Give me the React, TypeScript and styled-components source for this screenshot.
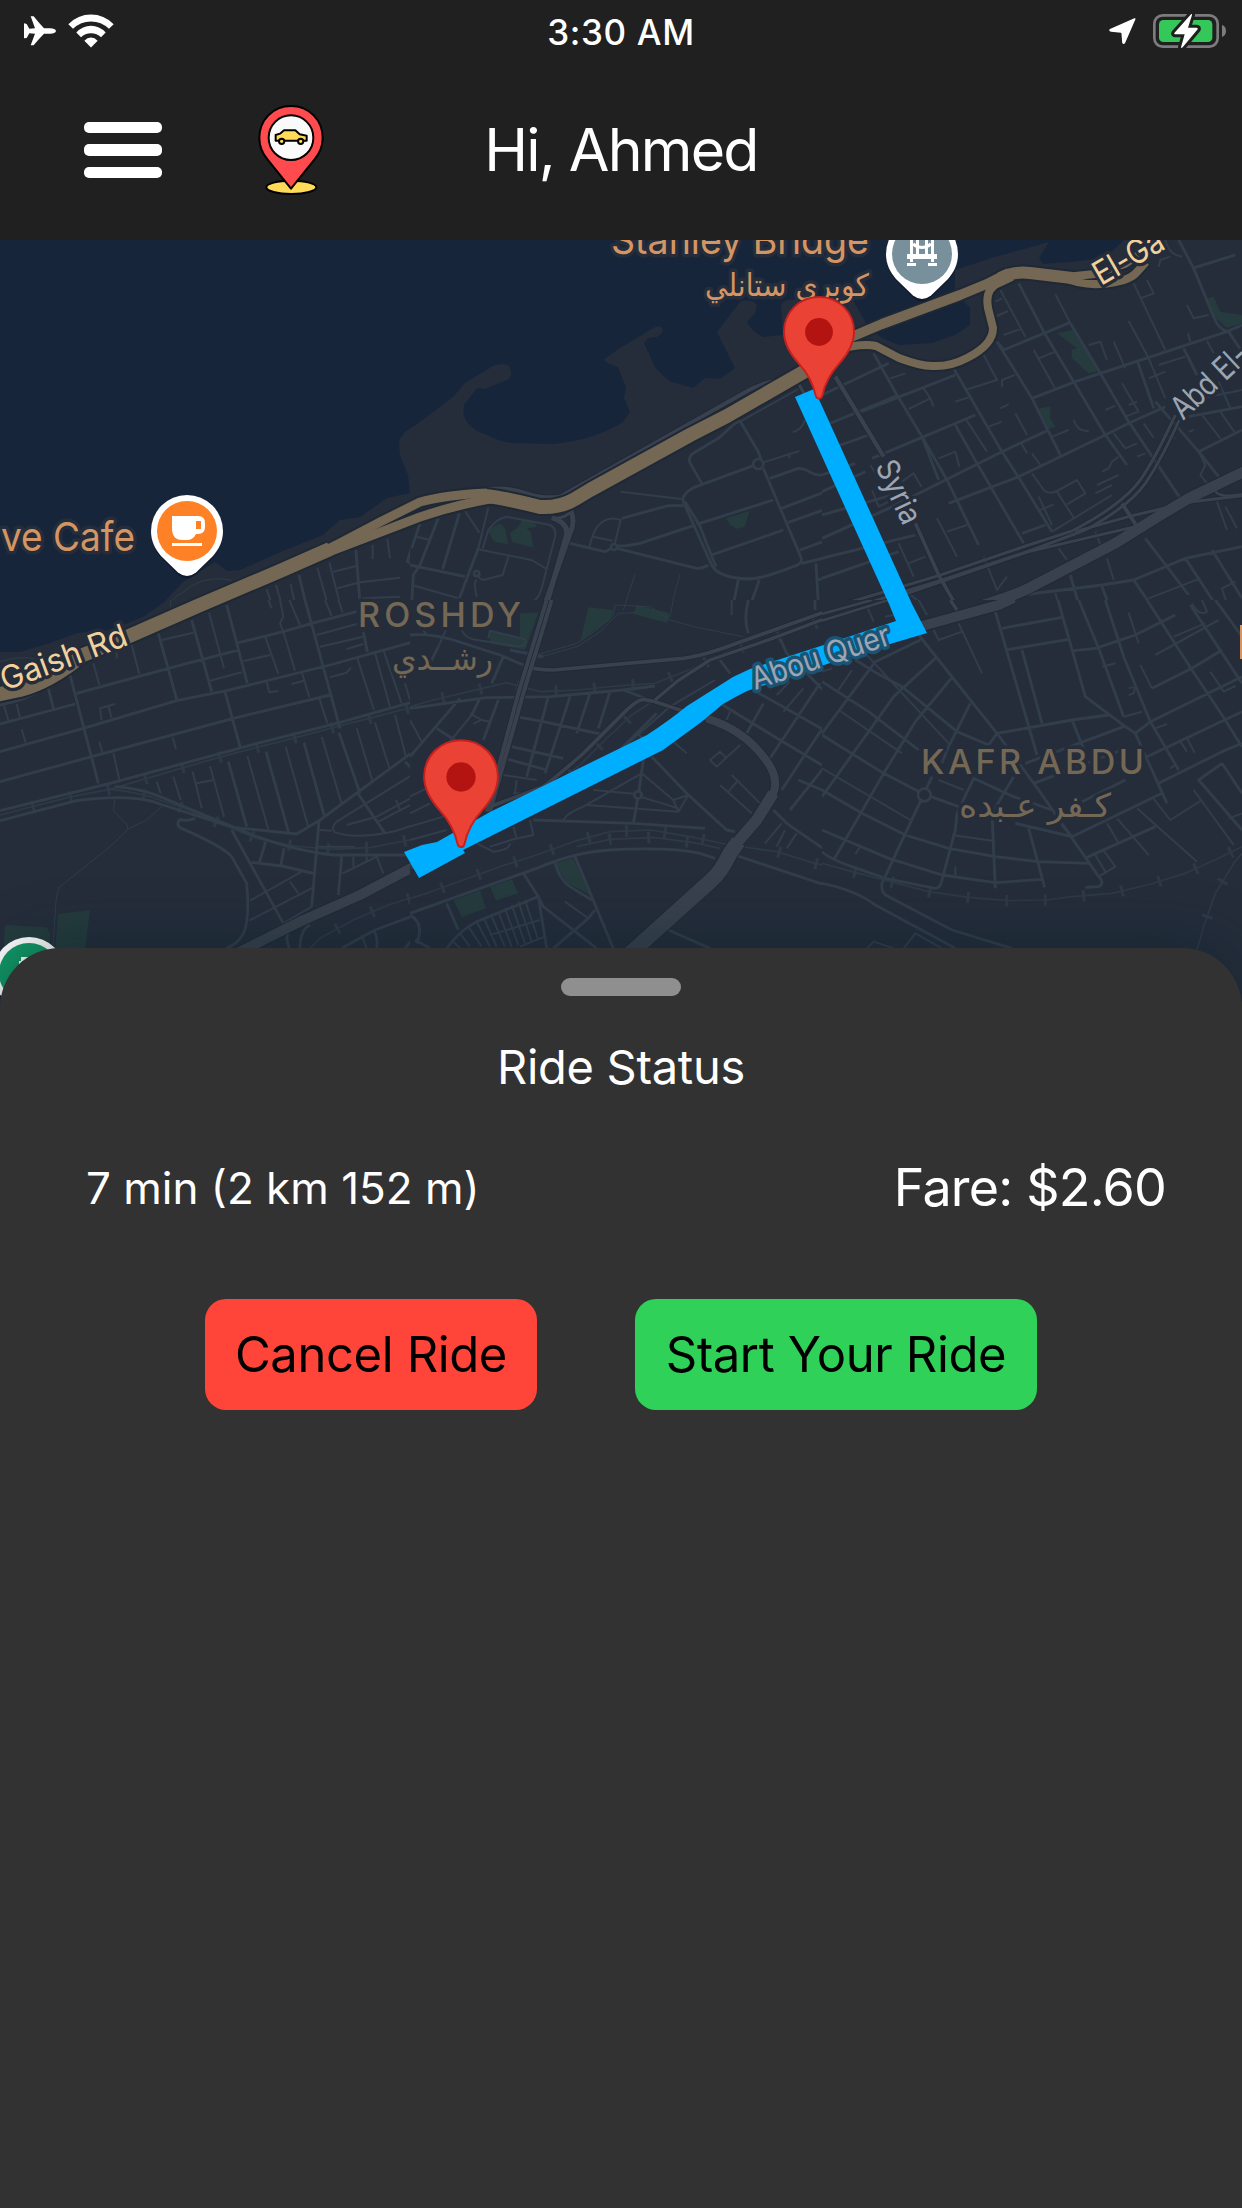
import React from "react";
import styled, { createGlobalStyle } from "styled-components";

const UI_FONT = `Inter, "Liberation Sans", sans-serif`;
const ARABIC_FONT = `"DejaVu Sans", "Noto Sans", sans-serif`;

const GlobalStyle = createGlobalStyle`
  *, *::before, *::after { box-sizing: border-box; }
  html, body { margin: 0; padding: 0; background: #323232; }
  body { font-family: ${UI_FONT}; color: #fff; }
`;

const Screen = styled.main`
  display: flex;
  flex-direction: column;
  width: 1242px;
  height: 2208px;
  overflow: hidden;
  background: #323232;
`;

const StatusBar = styled.div`
  display: grid;
  grid-template-columns: 1fr auto 1fr;
  align-items: center;
  height: 60px;
  padding: 0 16px;
  background: #202020;
`;

const StatusGroup = styled.div<{ $end?: boolean }>`
  display: flex;
  align-items: center;
  justify-content: ${(p) => (p.$end ? "flex-end" : "flex-start")};
  gap: ${(p) => (p.$end ? 16 : 12)}px;
  padding-left: 8px;
`;

const Clock = styled.time`
  font-size: 35px;
  font-weight: 500;
  line-height: 60px;
  letter-spacing: 0.6px;
  padding-top: 2px;
`;

const Header = styled.header`
  display: grid;
  grid-template-columns: 1fr auto 1fr;
  align-items: center;
  height: 180px;
  padding: 0 84px;
  background: #202020;
`;

const HeaderLeft = styled.div`
  display: flex;
  align-items: center;
  gap: 96px;
`;

const MenuButton = styled.button`
  display: flex;
  flex-direction: column;
  gap: 11px;
  width: 78px;
  padding: 0;
  border: 0;
  background: none;
`;

const MenuBar = styled.span`
  display: block;
  height: 11.5px;
  border-radius: 5px;
  background: #fff;
`;

const Greeting = styled.h1`
  margin: 0;
  font-size: 59px;
  font-weight: 400;
  line-height: 70px;
  letter-spacing: -1.8px;
`;

const MapArea = styled.section`
  height: 768px;
  flex: none;
  overflow: hidden;
  background: #17253b;
  & > svg { display: block; }
`;

const Sheet = styled.section`
  position: relative;
  flex: 1;
  display: flex;
  flex-direction: column;
  align-items: center;
  margin-top: -60px;
  padding-top: 30px;
  border-radius: 60px 60px 0 0;
  background: #323232;
  box-shadow: 0 -6px 60px rgba(4, 30, 40, 0.38);
`;

const Handle = styled.div`
  width: 120px;
  height: 18px;
  border-radius: 9px;
  background: #8f8f8f;
`;

const SheetTitle = styled.h2`
  margin: 41px 0 0;
  font-size: 47px;
  font-weight: 400;
  line-height: 60px;
  letter-spacing: -0.3px;
`;

const TripRow = styled.div`
  display: flex;
  justify-content: space-between;
  align-items: center;
  width: 100%;
  height: 80px;
  margin-top: 51px;
  padding: 0 76px 0 86px;
`;

const TripText = styled.span<{ $size: number; $tracking: number }>`
  font-size: ${(p) => p.$size}px;
  letter-spacing: ${(p) => p.$tracking}px;
  line-height: 60px;
  white-space: nowrap;
`;

const Actions = styled.div`
  display: flex;
  gap: 98px;
  margin-top: 71px;
`;

const ActionButton = styled.button<{ $tone: string; $width: number }>`
  width: ${(p) => p.$width}px;
  height: 111px;
  padding: 0;
  border: 0;
  border-radius: 21px;
  background: ${(p) => p.$tone};
  color: #000;
  font-family: ${UI_FONT};
  font-size: 49px;
  letter-spacing: -0.4px;
  white-space: nowrap;
`;

const StreetText = styled.text<{ $color: string; $halo?: string; $size: number }>`
  font-family: ${UI_FONT};
  font-size: ${(p) => p.$size}px;
  fill: ${(p) => p.$color};
  stroke: ${(p) => p.$halo ?? "#252d3b"};
  stroke-width: 7px;
  stroke-linejoin: round;
  paint-order: stroke;
`;

const ArabicText = styled(StreetText)`
  font-family: ${ARABIC_FONT};
  direction: rtl;
`;

/* ---------- status bar and header icons ---------- */

const AirplaneIcon = () => (
  <svg width="32" height="30" viewBox="72 50 96 90" fill="#fff">
    <path d="M168 95Q166 103 150 103L132 103Q115 120 101 138H92L105 103L88 102L80 116L72 117V72L80 74L88 88L105 87L92 51H101Q114 68 132 87L150 87Q166 87 168 95Z" />
  </svg>
);

const WifiIcon = () => (
  <svg width="46" height="34" viewBox="204 38 138 101" fill="#fff">
    <path d="M205 68Q234 39 273 39Q312 39 341 68L327 82Q304 60 273 60Q242 60 219 82Z" />
    <path d="M229 93Q248 73 273 73Q298 73 317 93L303 107Q291 95 273 95Q255 95 243 107Z" />
    <path d="M253 118Q262 108 273 108Q284 108 293 118L273 138Z" />
  </svg>
);

const LocationIcon = () => (
  <svg width="28" height="28" viewBox="28 51 84 84" fill="#fff" stroke="#fff" strokeWidth="5" strokeLinejoin="round">
    <path d="M105 57L32 89Q30 92 35 93L64 96Q68 97 68 101L70 127Q71 131 74 128Z" />
  </svg>
);

const BatteryIcon = () => (
  <svg width="73" height="36" viewBox="159 36 219 108">
    <rect x="163" y="43" width="190" height="94" rx="25" fill="none" stroke="#7c7c7e" strokeWidth="8" />
    <rect x="177" y="57" width="160" height="66" rx="13" fill="#34c759" />
    <path d="M366 72Q378 76 378 90Q378 104 366 108Z" fill="#7c7c7e" />
    <path d="M273 40L223 96Q221 100 226 100H254L243 139Q243 143 248 139L293 85Q295 80 290 80H264L276 42Q277 37 273 40Z" fill="#fff" stroke="#202020" strokeWidth="18" paintOrder="stroke" />
  </svg>
);

const LogoIcon = () => (
  <svg width="66" height="90" viewBox="24 29 198 270" stroke="#000" strokeWidth="6" strokeLinejoin="round">
    <ellipse cx="124" cy="276" rx="75" ry="20" fill="#ffdb57" />
    <path d="M123 32C68 32 28 75 28 128C28 154 37 174 53 193L123 280L193 193C209 174 218 154 218 128C218 75 178 32 123 32Z" fill="#ff4b4d" />
    <circle cx="123" cy="127" r="67" fill="#fafafa" />
    <path d="M77 136V119L90 115L102 105H136L149 117L170 121V136H77Z" fill="#ffdb57" />
    <circle cx="95" cy="138" r="8" fill="#ffdb57" />
    <circle cx="152" cy="138" r="8" fill="#ffdb57" />
  </svg>
);

/* ---------- map data: six survey tiles, three tile units per pixel ---------- */

type Tile = {
  id: string;
  x: number;
  y: number;
  w: number;
  h: number;
  parks?: string;
  thin?: string;
  minor: string;
  local?: string;
  rail?: string;
  rings?: [number, number, number][];
  arterial?: { d: string; w: number }[];
};

const TILES: Tile[] = [
  {
    id: "shore-west", x: 0, y: 235, w: 1230, h: 1095,
    thin: "M512 1108Q520 1085 545 1075Q590 1035 640 1032Q670 1030 695 1036",
    minor: "M800 1062L815 1108M828 1050L845 1108M872 1048L885 1108M952 998L983 1108M988 982L1020 1108M1000 1010L1072 992M1012 1060L1080 1042L1200 1028M1118 930V972M1162 912L1170 970M1085 1090L1200 1085",
    local: "M897 1020L918 1108M1068 945L1080 1108M1255 870L1222 980L1250 992L1238 1020L1235 1108",
  },
  {
    id: "shore-mid", x: 410, y: 235, w: 1236, h: 1095,
    parks: "M232 885L270 865L285 880L295 928L252 920ZM320 880L340 852L375 865L380 875L350 880L362 890L370 938L305 920L300 893ZM948 850L1018 828L1005 875L980 882L960 870Z",
    thin: "M675 1018L645 1108M810 1018L785 1108M615 1105H670",
    minor: "M20 905L60 915M165 828L208 893M235 818L205 940M295 965L278 1020L220 1035Q205 1032 200 1015M200 1035Q190 1040 200 1085M200 942L365 975L410 1002M5 1050L145 1090M550 905L608 917M612 935L632 855Q590 840 562 875Q550 890 538 935M632 770L815 792M990 560L1165 462M1138 655V670M1148 592Q1175 585 1185 555M1168 648L1060 682M218 940L235 885Q260 850 290 845L420 870Q440 880 435 905L395 1060Q385 1095 360 1105",
    local: "M30 865L5 940M85 850L30 990L10 1020L5 1108M148 835L98 1002M0 990L165 1025M205 940L148 1090M480 925L585 950L612 935M635 850L775 812L820 812M612 932Q640 935 690 925L850 872M612 938L860 1000Q880 1000 895 990M875 745L838 680Q838 660 850 655L925 610L975 565L990 558L1045 650L1052 672M1080 730L1165 700Q1185 700 1200 712Q1235 730 1260 710M860 868L1090 795M905 960L1120 885M1115 820L1260 765M1135 862L1260 818M1170 945L1260 912M1175 985L1260 965M1218 985L1225 1108M1225 1035L1260 1020M985 1035L970 1108M1048 1035L1022 1108M1030 692L850 758Q812 780 820 800L905 990Q925 1030 1020 1032Q1060 1030 1150 995Q1182 985 1172 965L1060 700M825 800L868 870L918 995",
    rings: [[1045, 687, 15], [200, 1016, 8], [612, 936, 9]],
    arterial: [
      { d: "M482 825Q497 860 480 895L405 1108", w: 15 },
      { d: "M425 848Q480 865 468 905L410 1108", w: 15 },
      { d: "M430 850Q470 850 482 828", w: 9 },
      { d: "M230 763Q300 755 350 775Q400 792 450 785L1000 475Q1050 445 1095 437", w: 12 },
      { d: "M1165 445L1185 480", w: 10 },
    ],
  },
  {
    id: "shore-east", x: 822, y: 235, w: 1260, h: 1095,
    parks: "M705 295L755 285L795 340L825 410L800 415L750 370L748 345L765 340ZM650 520L685 515L685 550L700 575L680 582ZM1155 190L1175 185L1195 230L1260 240V265L1215 278L1170 240Z",
    minor: "M535 165L610 305M920 258L980 370L1030 490M935 145L1030 345M875 320L910 400M635 345L698 458M1155 318L1175 355M1098 295L1105 320M430 465L525 435L485 360M1010 390L1090 365M980 430L1030 410M1140 490L1260 465M545 300L600 280M520 200L540 190M525 243L558 228M205 430L250 415M260 522L325 490L335 515M305 460L325 490M400 500L440 487M540 455V435L578 420M650 370L700 350M800 330L835 320L855 375M1095 210L1115 250L1160 240M1010 95L1015 75L1045 65M955 190L995 175L975 135M1030 15Q1040 60 1080 65M630 715L665 765Q680 780 705 768L765 735L790 775L735 808M705 770L755 848M840 710L860 700L870 680L890 665M875 595L910 640L945 625M945 665L970 655M230 925L275 1025M260 985L310 965M345 850L405 965M375 890L435 870M580 535L615 600M500 575L540 560M535 520L560 508M598 625L615 655M630 655L655 690M350 670L400 650L412 695M430 550L495 650M145 690L160 715M150 765L170 815L200 800M240 740L275 715L298 755M1130 650L1150 690L1135 720L1155 745M755 555Q765 590 800 588M690 605L740 585M850 525L880 512M1140 540L1195 610M1195 530L1240 595M900 445L950 530M965 565L995 608M690 890L870 780M655 825L695 808M650 785L690 870M825 750L890 720M820 775L870 750M855 970L875 1035M700 1075L710 1108M1185 800L1215 885M1210 815L1245 880M710 940L735 975M820 890L835 930M1240 1040L1200 1060L1215 1108M260 1075L300 1108M485 965L525 1065L555 1025M980 1090L1135 1030M700 178L745 265M910 545L950 530M920 510L945 500M1100 590L1115 585M1190 440L1225 520",
    local: "M155 355L225 480L300 605L375 735L470 930M395 400L470 530L540 650L595 735L690 890M590 145L665 290L755 440L850 600L915 690M525 320L630 490L715 660M745 265L835 415L920 560L1075 790M300 605L350 735M465 685L605 925M400 570L465 685M405 795L440 870M1070 15L1115 100L1175 245Q1190 285 1220 290L1260 350M945 375L995 520M1085 340L1125 420M1000 500L1130 650L1190 725M0 480L200 385M118 530L400 420M0 575L230 480M0 650L140 600M150 670L460 540M0 720L100 685M0 770L130 710M0 840L210 780M0 910L200 820L330 755L540 650L680 585M380 805L590 725L850 600L920 565L1030 515M0 970L280 900M0 1030L230 950M525 320L545 345L745 262M630 490L760 440L1215 290L1260 270M600 895L670 870M1110 100L1240 60M1100 545L1260 515M1130 650L1260 585M600 1080L840 1050L935 1035L1090 970L1260 935M1090 970L1180 1108M1170 945L1260 1090M970 910L1100 1080M935 1035L985 1108M745 1020L770 1108M840 1055L860 1108",
    rail: "M820 840L850 870M1020 600L1060 610",
    arterial: [
      { d: "M40 425L185 665", w: 13 },
      { d: "M280 865L350 1020L400 1108", w: 11 },
      { d: "M60 1108L350 1022L620 930L750 888Q900 810 955 735Q1000 670 1060 540", w: 9 },
      { d: "M150 1100L370 1032L630 945L790 885Q920 815 970 745Q1015 680 1072 555", w: 9 },
      { d: "M250 1078L620 950L940 875", w: 8 },
      { d: "M760 890L930 842L1110 800L1260 782", w: 9 },
      { d: "M900 805L945 875", w: 12 },
      { d: "M1180 770Q1200 790 1260 778", w: 8 },
      { d: "M430 1125Q560 1090 620 1060L880 925L1000 850L1100 790L1270 708", w: 32 },
    ],
  },
  {
    id: "town-west", x: 0, y: 600, w: 1230, h: 1240,
    parks: "M15 975L140 982L150 1000V1050H10ZM175 942L270 930L255 1050H165Z",
    thin: "M345 590L340 632L382 675V690L330 740L180 860Q168 880 167 920L158 1045M382 688L440 660L485 620M0 185Q60 165 110 178M512 0V20",
    minor: "M485 120L580 98M630 242L725 217M730 183L810 165M950 105L1070 72M960 140L1090 110M1040 147L1090 132M990 232L1040 218L1053 203M875 252L912 242M627 38L672 205M395 135L418 222M280 190L298 255M795 108L835 222M840 0L850 50L840 70L850 95L885 212M868 0L900 75M905 215L928 292M958 295L982 370M340 458L358 540M50 312L60 355M12 318L25 360M65 388L77 428M298 425L307 458M518 412L528 448M305 362L300 325L345 312M325 318L335 355M350 130V175M800 245L808 277L835 273M805 0L815 25M975 0L995 48M1015 0L1028 38M1072 175L1122 330M1125 158L1170 320M1150 150L1205 310M1215 250L1230 300M470 545L482 580M520 530L542 600M578 515L605 625M630 498L672 650M742 468L805 688M857 440L925 682M965 410L1025 612M1070 385L1118 545M1125 368L1170 510M1185 345L1218 470M1238 332L1260 400M590 550L640 540M960 690L995 692M1260 510L1010 665Q990 685 1005 697Q1060 715 1140 702Q1200 695 1260 665M1040 675L1130 650L1260 580M1188 600L1202 635M1135 665L1260 600M750 902L905 815M748 962L940 862M870 845L895 880M850 970L935 920M1028 820L1130 770L1150 820M1060 770V800M1100 770V782M950 740H1065M1085 1005L1100 1045",
    local: "M0 315Q80 300 130 265L205 225M0 372L225 312M0 455L250 385L530 302L680 272L990 195L1260 120M0 545L275 470L700 355L990 285M230 280L505 205L715 150M715 128L850 95L935 70L1070 35M210 225L295 550M475 100L532 305M575 60L635 275M680 15L742 250M675 275L720 440M915 0L1020 385M145 265L160 325M1090 95L1102 155M685 485L740 680M798 455L865 695M912 428L972 645M1017 398L1080 580M1070 575L1155 700M1215 485L1260 530M695 690L850 970M585 655Q560 665 540 658Q525 675 545 685Q670 740 695 770L740 850Q750 960 730 1000Q715 1030 680 1045M755 787L845 798L940 820M797 725L778 788M852 745L842 798M957 665L935 920M1025 770L1015 885M868 1045Q855 1010 865 1000M900 1045Q900 990 930 975M1025 1045L1125 990L1260 940M1120 990Q1135 1010 1130 1045M1245 940Q1265 990 1215 1045M0 632L330 550L780 428L1010 370L1260 300M0 662L230 602Q400 580 480 612L700 682L890 702L960 660L1260 440M345 560Q420 565 480 590L660 665L770 710Q900 755 1000 765H1220",
    rail: "M0 645L103 618L215 590L330 568L440 535L553 502L665 470L780 440L890 412L1010 380L1120 352L1260 315M330 568Q400 575 450 590L560 628L663 672L770 715L883 738L997 748L1113 742L1228 720L1260 712M930 1045L960 1015L1060 960L1165 915L1260 885",
    arterial: [{ d: "M700 1065L900 965L1080 885L1260 790", w: 30 }],
  },
  {
    id: "town-mid", x: 410, y: 600, w: 1236, h: 1240,
    parks: "M535 22L610 30L600 60L512 120ZM680 15L775 38Q785 50 770 68L670 42ZM240 95L330 112V40L385 38L345 150L240 130ZM130 900L210 872L228 925L155 952ZM240 860L305 838L325 880L258 902ZM435 790L490 775L540 885L470 848Z",
    thin: "M380 165L500 130L560 90L610 45L615 15L720 20L780 60L860 82L1000 110M380 175L505 138L570 95L625 40L680 38M650 0L640 30M790 0L780 50",
    minor: "M110 85L85 140M155 90Q165 115 200 120L330 140Q352 135 345 118L240 92L235 115M280 525L380 540M180 340L215 360L240 365M185 345L75 480M190 372L215 358M965 0V45M460 660Q470 640 520 620L695 520L790 600L835 585L805 635L530 615M550 570L680 582M690 590L805 625M790 600L805 635M680 400L720 430M790 425L830 460M990 435L920 500L900 480L930 455L950 475M965 525L1050 610M930 555L1025 640M985 540L955 575M1115 670L1065 730M1125 690L1100 740M1160 700L1130 745M1100 285L1140 245M1180 265L1120 335M960 335L950 360M0 590L60 560M0 640L60 610M0 680L100 650M0 720L110 690M320 540L310 620M310 580L370 580M200 730L250 755Q300 750 300 730M310 680L320 715L240 740M360 660L370 705L300 720M465 905L535 955M150 1000L180 1040M175 980L215 1040M200 965L240 1040M222 955L260 1040M243 945L285 1040M265 935L305 1040M285 925L325 1035M305 915L345 1030M325 905L365 1025M345 900L385 1020M240 1005L390 960M330 1040L405 1010M125 1020L150 1045M0 360L35 425M915 240L780 320L620 460",
    local: "M0 105Q60 100 130 120L270 165L340 195M85 140L50 210M280 170L245 250M20 60L50 105M300 150L400 170M265 300L220 420M415 290L350 530M480 290L405 520M540 280L500 400M600 275L565 385M330 352L400 365L585 405M305 440L460 475M295 478L410 510M640 270L720 300M150 295L0 470M80 385L150 430M210 295L185 345M740 340L600 480L530 560M1015 0Q1000 60 1015 100M1215 0V30M700 480L685 585L670 670M370 660L670 670L885 685M725 470L830 580L950 690L975 695M930 310L1110 420L1260 510M1030 270L1260 400M1230 250L1080 475M1260 350L1115 570M1260 480L1140 630M930 180L960 220M1165 540L1260 580M1090 630L1130 670L1260 760M1110 115L1130 160L1260 290M1060 310L1010 400M435 790Q450 840 480 860L545 900M495 770L610 1045M340 820L385 890L400 920L560 1045M385 890L410 1045M385 890L200 965Q150 990 110 1045M110 910L145 990M0 945Q45 970 20 1030M15 1020L60 1045M555 930L535 955L430 1045M775 990L900 1045M0 940L380 805Q500 755 600 750Q780 740 870 760L915 775M975 765L1260 860M0 325L230 293L420 290L640 270L735 258",
    rail: "M0 320L70 300L290 248L390 275L505 270L620 258L735 250L850 205L940 160L1050 125L1160 92L1260 55M735 300L665 345L585 420L515 490L440 550M0 895L50 880L160 840L270 800L380 765L490 725L600 695L720 690L840 710L960 735L1100 755L1215 790L1260 800M500 740L600 718L730 712L850 728L930 745",
    rings: [[684, 585, 11]],
    arterial: [
      { d: "M410 0L325 280L230 635", w: 12 },
      { d: "M425 0L340 280L240 635", w: 12 },
      { d: "M370 205Q400 210 430 210L820 175Q880 168 980 130L1260 30", w: 11 },
      { d: "M735 300L800 245L900 180L1080 118L1260 50", w: 10 },
      { d: "M240 620L400 560Q440 530 520 460L640 340Q680 300 700 298L735 305L900 360", w: 11 },
      { d: "M890 355Q1000 390 1060 470Q1110 530 1090 580L1040 660", w: 24 },
      { d: "M1090 580L1040 660L970 740", w: 34 },
      { d: "M985 725L960 760Q930 820 905 840L650 1070", w: 46 },
      { d: "M0 795L200 690", w: 28 },
    ],
  },
  {
    id: "town-east", x: 822, y: 600, w: 1260, h: 1240,
    minor: "M50 330L240 460M130 160L380 430M90 210L48 272M115 740L100 762M390 705L510 722M400 800V825M350 540L425 570M410 70L480 220M335 90L350 120L420 95M920 38L950 130M1055 110L1150 70M1000 165L1190 60M955 195L990 265M1165 215L1205 275L1240 258M1000 385L1035 372M1115 570L1235 735M1220 655L1260 640M945 625L1125 785M885 655L980 765M855 670L890 730M820 765L850 815M845 752L880 800L830 830M1075 425L1095 455M1095 415L1118 458M840 200L880 190M920 265Q945 255 935 280L920 285M1110 10Q1130 50 1155 35L1140 0M905 350L960 335M135 20L155 65M190 50L215 45M290 0L315 45M0 505L265 660M135 1045L155 1025L215 1045M245 1045L280 1000L360 1045M1045 505L1060 495M1140 600L1045 660L995 597M0 215L30 205",
    local: "M290 105L525 400L650 570L830 830Q850 850 830 860L790 862M295 120L160 185L0 400M340 175L215 290L0 590M390 232L280 365L185 520L35 780M445 310L375 450L360 490M330 530L215 775L180 850Q175 880 200 890L390 990L570 1045M100 180L165 220L240 260L405 395L500 435M0 245L140 335L290 450M0 405L185 520L300 580L410 620M0 570L120 640L250 705L380 745L520 770L650 785L800 790M0 690L200 775L360 825L520 848L660 838M0 755Q20 775 90 800L190 835L340 865Q355 865 360 840L400 690L405 640L455 535L575 590L690 630M525 400L500 435M575 530L510 640L520 865M620 685L668 862M525 400L750 360L860 345M520 35L645 465M600 150L660 370M540 85L720 52M550 150L740 118M708 0L790 290L910 380L940 400L1035 610M770 0L830 145L905 350M850 0L905 170L985 365L1070 510M610 490L905 380M635 550L900 450M750 360L790 460M755 152L820 145L940 105L1060 45M940 400L985 365L1260 230M975 0L1110 210L1200 345L1260 440M1105 15L1260 250M1180 0L1260 110M990 265L1110 205L1200 150M1010 550L1200 455L1260 430M975 470L1260 335M1260 690L1130 540L1200 490M1200 490L1260 580M750 710L1020 580M795 772L1000 680M750 710L720 675M580 670L750 710M780 605L910 540M0 850Q100 870 160 915L400 1045",
    rail: "M0 790L90 815L205 845L320 875L440 892L555 902L675 900L750 890L870 880L975 855L1090 820L1190 775L1260 740M1260 760L1235 790L1180 880L1145 980L1125 1050",
    rings: [[307, 585, 19]],
    arterial: [
      { d: "M0 42L150 0", w: 8 },
      { d: "M0 62L200 0", w: 8 },
      { d: "M385 0L405 30", w: 11 },
      { d: "M300 78L530 15L575 -6", w: 30 },
    ],
  },
];

const LAND =
  "M0 652H20L50 643L77 633L110 630L143 617L163 603L183 582L215 562L227 571L240 570L283 551L323 535L340 520L360 517L387 498L410 493L408 475L400 455L399 440L405 432L420 422L453 397L465 383L493 366Q503 362 509 366Q514 376 507 380L485 389L477 388L464 405Q462 415 467 422Q474 431 487 435Q500 442 513 443L553 444Q575 442 593 436Q615 428 623 422L630 412L624 398L626 387L618 367L610 364L603 360L617 350L655 327Q663 325 663 332L657 337Q648 336 644 343L655 367Q664 378 672 382L693 388L705 378L720 379L735 368L717 332L740 302Q752 298 757 305L755 313L747 322Q752 332 763 337L783 335L781 305Q785 298 800 300L854 302L868 327L882 338L899 345L932 343L955 335L970 325V308L955 292V270L995 257L1049 242L1039 258L1043 264L1069 262L1105 258L1124 240V230H1250V1020H0Z";

const HIGHWAYS = [
  { d: "M-5 695L20 690Q50 682 83 655L127 637L200 605L280 571L330 549", w: 14 },
  { d: "M318 554L340 543L380 522L420 502Q445 495 487 493", w: 9 },
  { d: "M318 556L360 540L420 517Q455 505 495 498", w: 9 },
  { d: "M485 496Q500 497 540 507Q560 508 575 499L590 490L690 435L727 416L807 370L835 350", w: 14 },
  { d: "M830 346L882 324L960 295L989 283L1009 273", w: 10 },
  { d: "M1000 278Q1014 271 1030 273L1072 278", w: 12 },
  { d: "M1065 277L1095 274L1125 264L1146 250", w: 8 },
  { d: "M1065 278Q1080 285 1100 284Q1128 282 1136 273L1146 262", w: 8 },
  { d: "M835 350Q862 343 876 346L899 358Q920 366 932 366Q950 367 967 358Q993 345 993 328L988 308Q985 292 995 285L1012 277", w: 8 },
];

const MapTile = ({ tile }: { tile: Tile }) => (
  <svg x={tile.x} y={tile.y} width={tile.w / 3} height={tile.h / 3} viewBox={`0 0 ${tile.w} ${tile.h}`} fill="none" strokeLinejoin="round">
    {tile.parks && <path d={tile.parks} fill="#253b3d" />}
    {tile.rail && (
      <>
        <path d={tile.rail} stroke="#2e3947" strokeWidth="5" />
        <path d={tile.rail} stroke="#2e3947" strokeWidth="34" strokeDasharray="9 107" strokeDashoffset="-98" />
      </>
    )}
    {tile.thin && <path d={tile.thin} stroke="#2e3d4a" strokeWidth="3" />}
    <path d={tile.minor} stroke="#323d4b" strokeWidth="6" />
    {tile.local && <path d={tile.local} stroke="#323d4b" strokeWidth="8.500" />}
    {tile.rings?.map(([cx, cy, r]) => (
      <circle key={`${cx}-${cy}`} cx={cx} cy={cy} r={r} fill="#252d3b" stroke="#323d4b" strokeWidth="8" />
    ))}
    {tile.arterial?.map((road) => (
      <path key={`${road.d}-case`} d={road.d} stroke="#202936" strokeWidth={road.w + 5} />
    ))}
    {tile.arterial?.map((road) => (
      <path key={road.d} d={road.d} stroke="#38414d" strokeWidth={road.w} />
    ))}
  </svg>
);

const RidePin = ({ x, y, scale = 1 }: { x: number; y: number; scale?: number }) => (
  <g transform={`translate(${x} ${y}) scale(${scale})`}>
    <path
      d="M0 -36.5C-20.500 -36.500 -36.500 -20.500 -36.500 0C-36.500 13 -30 23 -21 33C-12 43 -6 54 -3.500 66C-2.500 70.500 2.500 70.500 3.500 66C6 54 12 43 21 33C30 23 36.500 13 36.500 0C36.500 -20.500 20.500 -36.500 0 -36.500Z"
      fill="#ea4335"
      stroke="#c5221f"
      strokeWidth="2"
    />
    <circle r="14.500" fill="#b31412" />
  </g>
);

const PlacePin = ({ x, y, tone, children }: { x: number; y: number; tone: string; children?: React.ReactNode }) => (
  <g transform={`translate(${x} ${y})`}>
    <path d="M0 -36A36 36 0 0 0 -36 0C-36 10 -32 18 -26 25L-9 42Q0 49 9 42L26 25C32 18 36 10 36 0A36 36 0 0 0 0 -36Z" fill="#000" opacity="0.25" transform="translate(0 2)" />
    <path d="M0 -36A36 36 0 0 0 -36 0C-36 10 -32 18 -26 25L-9 41.500Q0 48.500 9 41.500L26 25C32 18 36 10 36 0A36 36 0 0 0 0 -36Z" fill="#fff" />
    <circle r="30" fill={tone} />
    {children}
  </g>
);

const RideMap = () => (
  <svg width="1242" height="768" viewBox="0 240 1242 768">
    <path d={LAND} fill="#252d3b" />
    {TILES.map((tile) => (
      <MapTile key={tile.id} tile={tile} />
    ))}
    <g fill="none" strokeLinejoin="round">
      {HIGHWAYS.map((road) => (
        <path key={`${road.d}-case`} d={road.d} stroke="#1f2835" strokeWidth={road.w + 4} />
      ))}
      {HIGHWAYS.map((road) => (
        <path key={road.d} d={road.d} stroke="#746855" strokeWidth={road.w} />
      ))}
    </g>

    <path
      d="M795 397L814 389L822 406L912 604L927 633L890 644L830 663L753 689L747 691Q735 697 723 704L700 723L663 750L547 808L477 843L463 850L465 853L419 878L404 852L422 845L437 842L490 812L647 735Q670 720 687 706L733 677L750 669L830 643L896 621L889 604Z"
      fill="#00aeff"
    />

    <StreetText x="1" y="551" $size={40} $color="#d59563" textLength="134" lengthAdjust="spacingAndGlyphs">ve Cafe</StreetText>
    <StreetText x="611" y="254" $size={40} $color="#d59563" textLength="258" lengthAdjust="spacingAndGlyphs">Stanley Bridge</StreetText>
    <ArabicText x="869" y="296" $size={31} $color="#d59563" textLength="164" lengthAdjust="spacingAndGlyphs">كوبري ستانلي</ArabicText>
    <StreetText x="358" y="627" $size={34} $color="#746855" textLength="163" fontWeight="500">ROSHDY</StreetText>
    <ArabicText x="493" y="670" $size={33} $color="#746855" textLength="101" lengthAdjust="spacingAndGlyphs">رشــدي</ArabicText>
    <StreetText x="921" y="774" $size={34} $color="#746855" textLength="223" fontWeight="500">KAFR ABDU</StreetText>
    <ArabicText x="1111" y="817" $size={33} $color="#746855" textLength="152" lengthAdjust="spacingAndGlyphs">كـفر عـبده</ArabicText>
    <StreetText transform="translate(5 691) rotate(-20.5)" $size={32} $color="#f3d19c" textLength="133" lengthAdjust="spacingAndGlyphs">Gaish Rd</StreetText>
    <StreetText transform="translate(1101 286) rotate(-30)" $size={33} $color="#f3d19c" textLength="76" lengthAdjust="spacingAndGlyphs">El-Ga</StreetText>
    <StreetText transform="translate(875 466) rotate(65)" $size={31} $color="#9ca5b3" textLength="67" lengthAdjust="spacingAndGlyphs">Syria</StreetText>
    <StreetText transform="translate(1183 421) rotate(-43)" $size={32} $color="#9ca5b3" textLength="92" lengthAdjust="spacingAndGlyphs">Abd El-</StreetText>
    <StreetText transform="translate(755 690) rotate(-18.5)" $size={31} $color="#9ca5b3" $halo="#1a5475" textLength="145" lengthAdjust="spacingAndGlyphs">Abou Quer</StreetText>
    <rect x="1240" y="625" width="2" height="34" fill="#d59563" />

    <PlacePin x={187} y={531} tone="#ff8126">
      <path d="M-15 -15H11Q18 -15 18 -8V-4Q18 3 11 3H9Q6 9 0 9H-5Q-15 9 -15 -3ZM9 -10V-2H14V-10ZM-15 12H15V15H-15Z" fill="#fff" fillRule="evenodd" />
    </PlacePin>
    <PlacePin x={922} y={254} tone="#78909c">
      <g fill="none" stroke="#fff" strokeWidth="3">
        <path d="M-10.500 -16V8M-4.500 -16V2M4.500 -16V2M10.500 -16V8M-9 -10Q0 -3 9 -10" />
        <path d="M-15 2.500H15" strokeWidth="5" />
        <path d="M-15 10.500H-6M6 10.500H15" />
      </g>
    </PlacePin>
    <PlacePin x={29} y={973} tone="#129866">
      <path d="M-10 10V-12H-8V-16H12V-12H-7V10Z" fill="#fff" />
    </PlacePin>

    <RidePin x={819} y={332} scale={0.96} />
    <RidePin x={461} y={777} scale={1.01} />
  </svg>
);

export default function App() {
  return (
    <Screen>
      <GlobalStyle />
      <StatusBar>
        <StatusGroup>
          <AirplaneIcon />
          <WifiIcon />
        </StatusGroup>
        <Clock>3:30 AM</Clock>
        <StatusGroup $end>
          <LocationIcon />
          <BatteryIcon />
        </StatusGroup>
      </StatusBar>
      <Header>
        <HeaderLeft>
          <MenuButton aria-label="Menu">
            <MenuBar />
            <MenuBar />
            <MenuBar />
          </MenuButton>
          <LogoIcon />
        </HeaderLeft>
        <Greeting>Hi, Ahmed</Greeting>
      </Header>
      <MapArea>
        <RideMap />
      </MapArea>
      <Sheet>
        <Handle />
        <SheetTitle>Ride Status</SheetTitle>
        <TripRow>
          <TripText $size={44} $tracking={0}>7 min (2 km 152 m)</TripText>
          <TripText $size={52} $tracking={-0.8}>Fare: $2.60</TripText>
        </TripRow>
        <Actions>
          <ActionButton $tone="#ff453a" $width={332}>Cancel Ride</ActionButton>
          <ActionButton $tone="#30d158" $width={402}>Start Your Ride</ActionButton>
        </Actions>
      </Sheet>
    </Screen>
  );
}
